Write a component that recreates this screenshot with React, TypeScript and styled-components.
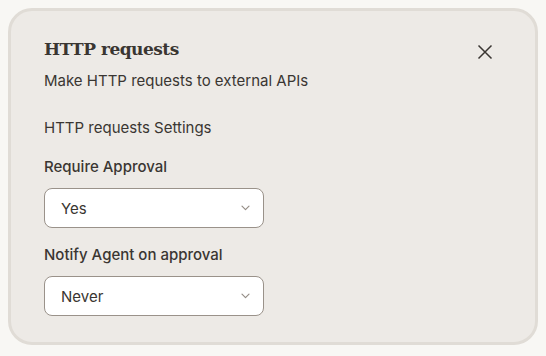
import React from 'react';
import styled, { createGlobalStyle } from 'styled-components';

const GlobalStyle = createGlobalStyle`
  html, body {
    margin: 0;
    padding: 0;
    background: #f8f7f4;
  }
  body {
    font-family: Inter, 'Open Sans', 'Liberation Sans', sans-serif;
    color: #3a3632;
  }
`;

const Page = styled.div`
  padding: 8px;
  width: 546px;
  height: 356px;
  box-sizing: border-box;
`;

const Card = styled.div`
  position: relative;
  box-sizing: border-box;
  width: 530px;
  height: 337px;
  background: #edeae6;
  border: 3px solid #e0dcd6;
  border-radius: 24px;
  padding: 25px 33px 0 33px;
  display: flex;
  flex-direction: column;
`;

const Title = styled.h2`
  margin: 0;
  font-family: 'DejaVu Serif', 'Liberation Serif', serif;
  font-size: 17px;
  font-weight: 700;
  line-height: 26px;
  color: #3a3632;
  letter-spacing: -0.5px;
`;

const Subtitle = styled.p`
  margin: 8px 0 0;
  font-size: 15px;
  line-height: 22px;
  color: #3a3632;
`;

const Section = styled.p`
  margin: 25px 0 0;
  font-size: 15px;
  line-height: 22px;
  color: #3a3632;
`;

const Field = styled.div<{ $first?: boolean }>`
  margin-top: ${(p) => (p.$first ? 17 : 16)}px;
  display: flex;
  flex-direction: column;
  gap: 10px;
`;

const Label = styled.label`
  font-size: 15px;
  font-weight: 500;
  line-height: 22px;
  color: #3a3632;
`;

const Select = styled.div`
  box-sizing: border-box;
  width: 220px;
  height: 40px;
  background: #ffffff;
  border: 1px solid #9a928a;
  border-radius: 8px;
  display: flex;
  align-items: center;
  justify-content: space-between;
  padding: 0 13px 0 16px;
  font-size: 15px;
  color: #3a3632;
`;

const CloseButton = styled.button`
  position: absolute;
  top: 31px;
  right: 40px;
  width: 20px;
  height: 20px;
  padding: 0;
  border: none;
  background: transparent;
  display: flex;
  align-items: center;
  justify-content: center;
  color: #3a3632;
`;

const Chevron = () => (
  <svg width="9" height="6" viewBox="0 0 9 6" fill="none">
    <path d="M1 1.2l3.5 3.5 3.5-3.5" stroke="#958e87" strokeWidth="1.2" strokeLinecap="round" strokeLinejoin="round" />
  </svg>
);

const fields = [
  { label: 'Require Approval', value: 'Yes' },
  { label: 'Notify Agent on approval', value: 'Never' },
];

const App: React.FC = () => {
  return (
    <Page>
      <GlobalStyle />
      <Card>
        <CloseButton aria-label="Close">
          <svg width="16" height="16" viewBox="0 0 16 16" fill="none">
            <path d="M1.5 1.5l13 13M14.5 1.5l-13 13" stroke="#3a3632" strokeWidth="1.5" />
          </svg>
        </CloseButton>
        <Title>HTTP requests</Title>
        <Subtitle>Make HTTP requests to external APIs</Subtitle>
        <Section>HTTP requests Settings</Section>
        {fields.map((f, i) => (
          <Field key={f.label} $first={i === 0}>
            <Label>{f.label}</Label>
            <Select>
              <span>{f.value}</span>
              <Chevron />
            </Select>
          </Field>
        ))}
      </Card>
    </Page>
  );
};

export default App;
